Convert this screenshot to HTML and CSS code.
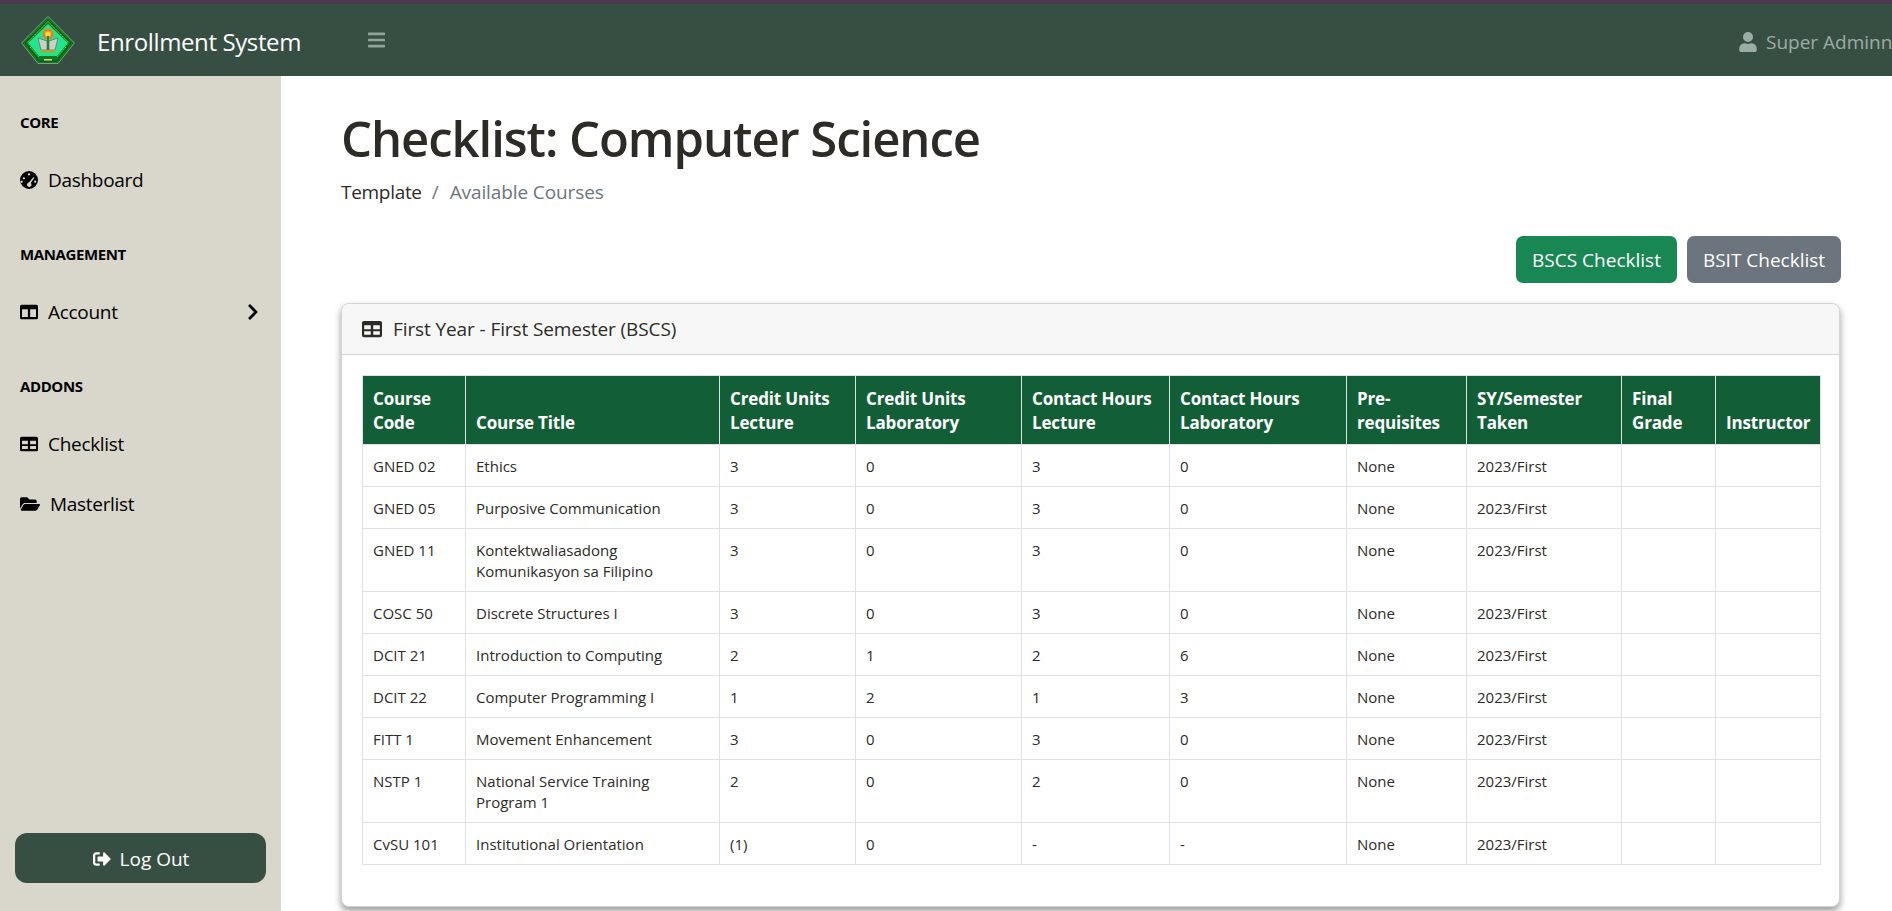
FILE: index.html
```html
<!DOCTYPE html>
<html lang="en">
<head>
<meta charset="utf-8">
<title>Checklist: Computer Science</title>
<link rel="stylesheet" href="styles.css">
</head>
<body>
<header class="topbar">
  <a class="brand" href="#">
    <svg class="logo" viewBox="0 0 54 48" aria-hidden="true">
      <path d="M27 .5 L53.500 27 L37 47.500 L17 47.500 L.5 27 Z" fill="#0b7a1e" stroke="#8a968e" stroke-width="1" stroke-linejoin="round"/>
      <path d="M27 4 L50 27 L35.500 45 L18.500 45 L4 27 Z" fill="none" stroke="#0a5314" stroke-width="1"/>
      <path d="M27 5.500 L48 27 M27 5.500 L6 27 M9 31 L18 41 M45 31 L36 41" fill="none" stroke="#a9c23c" stroke-width="1" stroke-dasharray="1.500 1"/>
      <path d="M27 8 L47 27 L36 40 L18 40 L7 27 Z" fill="#22e48e"/>
      <circle cx="27" cy="18" r="5.500" fill="#ef7f1a"/>
      <circle cx="27" cy="18" r="2.800" fill="#f8d93f"/>
      <path d="M17 22 L26 25 L26 34 L20 34 Z M37 22 L28 25 L28 34 L34 34 Z" fill="#cfcfca" stroke="#5d655f" stroke-width=".7"/>
      <rect x="26" y="20" width="2" height="14" fill="#178a3a"/>
      <rect x="20" y="34" width="14" height="2.500" fill="#b6a32a"/>
      <rect x="23" y="43" width="8" height="1.500" fill="#d9d77a"/>
    </svg>
    <span class="brand-name">Enrollment System</span>
  </a>
  <button class="toggle" type="button" aria-label="Toggle navigation">
    <svg viewBox="0 0 448 512" class="toggle-icon"><path fill="currentColor" d="M16 132h416c8.800 0 16-7.200 16-16V76c0-8.800-7.200-16-16-16H16C7.200 60 0 67.200 0 76v40c0 8.800 7.200 16 16 16zm0 160h416c8.800 0 16-7.200 16-16v-40c0-8.800-7.200-16-16-16H16c-8.800 0-16 7.200-16 16v40c0 8.800 7.200 16 16 16zm0 160h416c8.800 0 16-7.200 16-16v-40c0-8.800-7.200-16-16-16H16c-8.800 0-16 7.200-16 16v40c0 8.800 7.200 16 16 16z"/></svg>
  </button>
  <div class="user">
    <svg viewBox="0 0 448 512" class="user-icon"><path fill="currentColor" d="M224 256a128 128 0 1 0 0-256 128 128 0 0 0 0 256zm89.600 32h-16.700a174 174 0 0 1-145.800 0h-16.700A134.400 134.400 0 0 0 0 422.400V464c0 26.500 21.500 48 48 48h352c26.500 0 48-21.500 48-48v-41.600A134.400 134.400 0 0 0 313.600 288z"/></svg>
    <span class="user-name">Super Adminn</span>
  </div>
</header>
<div class="layout">
  <aside class="sidebar">
    <nav class="side-nav">
      <div class="side-heading side-heading-first">CORE</div>
      <a class="side-link" href="#">
        <svg class="side-icon" viewBox="0 0 512 512"><path fill="currentColor" fill-rule="evenodd" d="M256 0a256 256 0 1 0 0 512 256 256 0 0 0 0-512zm0 64a32 32 0 1 1 0 64 32 32 0 0 1 0-64zM112 176a32 32 0 1 1 0 64 32 32 0 0 1 0-64zm-32 128a32 32 0 1 1 0-.1zm300-124 30 14-104 150a64 64 0 1 1-54-16zm52 92a32 32 0 1 1 0 64 32 32 0 0 1 0-64z"/></svg>
        <span>Dashboard</span>
      </a>
      <div class="side-heading">MANAGEMENT</div>
      <a class="side-link" href="#">
        <svg class="side-icon" viewBox="0 0 512 512"><path fill="currentColor" fill-rule="evenodd" d="M48 48h416a48 48 0 0 1 48 48v320a48 48 0 0 1-48 48H48a48 48 0 0 1-48-48V96a48 48 0 0 1 48-48zm8 128v224h168V176zm232 0v224h168V176z"/></svg>
        <span>Account</span>
        <svg class="chevron" viewBox="0 0 320 512"><path fill="currentColor" d="M285.500 273 91.100 467.300c-9.400 9.400-24.600 9.400-33.900 0l-22.700-22.700c-9.400-9.400-9.400-24.500 0-33.900L188.500 256 34.500 101.300c-9.300-9.400-9.300-24.500 0-33.900l22.700-22.700c9.400-9.400 24.600-9.400 33.900 0L285.500 239c9.400 9.400 9.400 24.600 0 34z"/></svg>
      </a>
      <div class="side-heading">ADDONS</div>
      <a class="side-link" href="#">
        <svg class="side-icon" viewBox="0 0 512 512"><path fill="currentColor" fill-rule="evenodd" d="M48 48h416a48 48 0 0 1 48 48v320a48 48 0 0 1-48 48H48a48 48 0 0 1-48-48V96a48 48 0 0 1 48-48zm8 112v104h168V160zm232 0v104h168V160zM56 312v88h168v-88zm232 0v88h168v-88z"/></svg>
        <span>Checklist</span>
      </a>
      <a class="side-link side-link-wide" href="#">
        <svg class="side-icon folder" viewBox="0 0 576 512"><path fill="currentColor" d="M572.700 292.100 500.300 416.200A64 64 0 0 1 445 448H45c-18.500 0-30.100-20.100-20.700-36.100l72.400-124.100A64 64 0 0 1 152 256h400c18.500 0 30.100 20.100 20.700 36.100zM152 224h328v-48c0-26.500-21.500-48-48-48H272l-64-64H48C21.500 64 0 85.500 0 112v278l69.100-118.400C86.200 242.300 117.900 224 152 224z"/></svg>
        <span>Masterlist</span>
      </a>
    </nav>
    <div class="side-footer">
      <a class="logout" href="#">
        <svg class="logout-icon" viewBox="0 0 512 512"><path fill="currentColor" d="M497 273 329 441c-15 15-41 4.500-41-17v-96H152c-13.300 0-24-10.700-24-24v-96c0-13.300 10.700-24 24-24h136V88c0-21.400 25.900-32 41-17l168 168c9.300 9.400 9.300 24.600 0 34zM192 436v-40c0-6.600-5.400-12-12-12H96c-17.700 0-32-14.300-32-32V160c0-17.700 14.300-32 32-32h84c6.600 0 12-5.400 12-12V76c0-6.600-5.400-12-12-12H96c-53 0-96 43-96 96v192c0 53 43 96 96 96h84c6.600 0 12-5.400 12-12z"/></svg>
        <span>Log Out</span>
      </a>
    </div>
  </aside>
  <main class="content">
    <h1 class="page-title">Checklist: Computer Science</h1>
    <ol class="crumbs">
      <li class="crumb">Template</li>
      <li class="crumb crumb-active">Available Courses</li>
    </ol>
    <div class="actions">
      <a class="btn btn-green" href="#">BSCS Checklist</a>
      <a class="btn btn-gray" href="#">BSIT Checklist</a>
    </div>
    <section class="card">
      <div class="card-head">
        <svg class="card-icon" viewBox="0 0 512 512"><path fill="currentColor" fill-rule="evenodd" d="M48 48h416a48 48 0 0 1 48 48v320a48 48 0 0 1-48 48H48a48 48 0 0 1-48-48V96a48 48 0 0 1 48-48zm8 112v104h168V160zm232 0v104h168V160zM56 312v88h168v-88zm232 0v88h168v-88z"/></svg>
        <span>First Year - First Semester (BSCS)</span>
      </div>
      <div class="card-body">
        <table class="grid">
          <colgroup>
            <col class="c1"><col class="c2"><col class="c3"><col class="c4"><col class="c5"><col class="c6"><col class="c7"><col class="c8"><col class="c9"><col class="c10">
          </colgroup>
          <thead>
            <tr><th>Course Code</th><th>Course Title</th><th>Credit Units Lecture</th><th>Credit Units Laboratory</th><th>Contact Hours Lecture</th><th>Contact Hours Laboratory</th><th>Pre-requisites</th><th>SY/Semester Taken</th><th>Final Grade</th><th>Instructor</th></tr>
          </thead>
          <tbody>
            <tr><td>GNED 02</td><td>Ethics</td><td>3</td><td>0</td><td>3</td><td>0</td><td>None</td><td>2023/First</td><td></td><td></td></tr>
            <tr><td>GNED 05</td><td>Purposive Communication</td><td>3</td><td>0</td><td>3</td><td>0</td><td>None</td><td>2023/First</td><td></td><td></td></tr>
            <tr><td>GNED 11</td><td>Kontektwaliasadong Komunikasyon sa Filipino</td><td>3</td><td>0</td><td>3</td><td>0</td><td>None</td><td>2023/First</td><td></td><td></td></tr>
            <tr><td>COSC 50</td><td>Discrete Structures I</td><td>3</td><td>0</td><td>3</td><td>0</td><td>None</td><td>2023/First</td><td></td><td></td></tr>
            <tr><td>DCIT 21</td><td>Introduction to Computing</td><td>2</td><td>1</td><td>2</td><td>6</td><td>None</td><td>2023/First</td><td></td><td></td></tr>
            <tr><td>DCIT 22</td><td>Computer Programming I</td><td>1</td><td>2</td><td>1</td><td>3</td><td>None</td><td>2023/First</td><td></td><td></td></tr>
            <tr><td>FITT 1</td><td>Movement Enhancement</td><td>3</td><td>0</td><td>3</td><td>0</td><td>None</td><td>2023/First</td><td></td><td></td></tr>
            <tr><td>NSTP 1</td><td>National Service Training Program 1</td><td>2</td><td>0</td><td>2</td><td>0</td><td>None</td><td>2023/First</td><td></td><td></td></tr>
            <tr><td>CvSU 101</td><td>Institutional Orientation</td><td>(1)</td><td>0</td><td>-</td><td>-</td><td>None</td><td>2023/First</td><td></td><td></td></tr>
          </tbody>
        </table>
      </div>
    </section>
  </main>
</div>
</body>
</html>
```

FILE: styles.css
```css
* { box-sizing: border-box; }
html, body { height: 100%; margin: 0; }
body {
  font-family: "Open Sans", "Noto Sans", sans-serif;
  color: #2c2b26;
  background: #fff;
  overflow: hidden;
  display: flex;
  flex-direction: column;
}
a { text-decoration: none; color: inherit; }

.topbar {
  flex: none;
  height: 76px;
  border-top: 4px solid #4a3850;
  background: #374f43;
  display: flex;
  align-items: center;
  white-space: nowrap;
}
.brand { display: flex; align-items: center; width: 368px; padding-left: 21px; flex: none; color: #fff; }
.logo { width: 54px; height: 48px; margin-right: 22px; flex: none; }
.brand-name { font-size: 24px; letter-spacing: -.38px; padding-top: 2px; }
.toggle { background: none; border: 0; padding: 0; color: #93a49b; display: flex; }
.toggle-icon { width: 17px; height: 20px; }
.user { margin-left: auto; display: flex; align-items: center; color: #9dada5; width: 153px; flex: none; padding-top: 3px; }
.user-icon { width: 18px; height: 20px; flex: none; margin-right: 9px; }
.user-name { font-size: 19px; }

.layout { flex: 1; display: flex; min-height: 0; }

.sidebar {
  flex: none;
  width: 281px;
  background: #d9d7cc;
  color: #000;
  display: flex;
  flex-direction: column;
  justify-content: space-between;
}
.side-nav { display: flex; flex-direction: column; padding: 0 20px; }
.side-heading { font-size: 15px; font-weight: 700; letter-spacing: -.4px; height: 20px; line-height: 18px; margin-top: 52px; }
.side-heading-first { margin-top: 37px; }
.side-link { display: flex; align-items: center; height: 26px; margin-top: 34px; font-size: 19px; letter-spacing: -.3px; }
.side-icon { width: 18px; height: 18px; margin-right: 10px; flex: none; }
.side-icon.folder { width: 20px; }
.chevron { width: 12px; height: 18px; margin-left: auto; margin-right: 2px; flex: none; }
.side-footer { padding: 0 15px 28px; }
.logout {
  display: flex; align-items: center; justify-content: center;
  height: 50px; padding-top: 2px; background: #374f43; color: #fff; border-radius: 12px; font-size: 19px;
}
.logout-icon { width: 20px; height: 18px; margin-right: 8px; }

.content { flex: 1; min-width: 0; padding: 0 52px 0 60px; }
.page-title { margin: 30px 0 0; font-size: 49px; line-height: 64px; font-weight: 600; letter-spacing: -1.05px; color: #2c2b26; }
.crumbs { list-style: none; display: flex; margin: 9px 0 0; padding: 0; font-size: 19px; line-height: 27px; letter-spacing: -.3px; }
.crumb-active { color: #6c757d; letter-spacing: -.1px; }
.crumb-active::before { content: "/"; color: #6c757d; padding: 0 11px 0 10px; }
.actions { display: flex; justify-content: flex-end; gap: 10px; margin-top: 30px; margin-right: -1px; }
.btn { height: 47px; padding-top: 1px; display: flex; align-items: center; justify-content: center; color: #fff; border-radius: 7px; font-size: 19px; }
.btn-green { background: #198754; width: 161px; }
.btn-gray { background: #6c757d; width: 154px; }

.card {
  margin-top: 20px;
  border: 1px solid #d4d4d4;
  border-radius: 8px;
  background: #fff;
  box-shadow: 0 4px 7px rgba(0, 0, 0, .4);
  width: 1499px;
}
.card-head {
  height: 51px;
  display: flex;
  align-items: center;
  padding-left: 20px;
  background: #f7f7f7;
  border-bottom: 1px solid #d4d4d4;
  border-radius: 8px 8px 0 0;
  font-size: 19px;
  letter-spacing: -.1px;
}
.card-icon { width: 20px; height: 20px; margin-right: 11px; flex: none; }
.card-body { padding: 20px 20px 41px; }

.grid { width: 1458px; table-layout: fixed; border-collapse: collapse; font-size: 15px; line-height: 21px; }
.c1 { width: 103px; } .c2 { width: 254px; } .c3 { width: 136px; } .c4 { width: 166px; } .c5 { width: 148px; }
.c6 { width: 177px; } .c7 { width: 120px; } .c8 { width: 155px; } .c9 { width: 94px; } .c10 { width: 105px; }
.grid th, .grid td { border: 1px solid #dee2e6; padding: 11px 10px 9px; text-align: left; vertical-align: top; }
.grid th {
  background: #125f37; color: #fff; font-size: 17px; line-height: 24px; font-weight: 700;
  vertical-align: bottom; height: 69px; letter-spacing: -.15px;
}
```
